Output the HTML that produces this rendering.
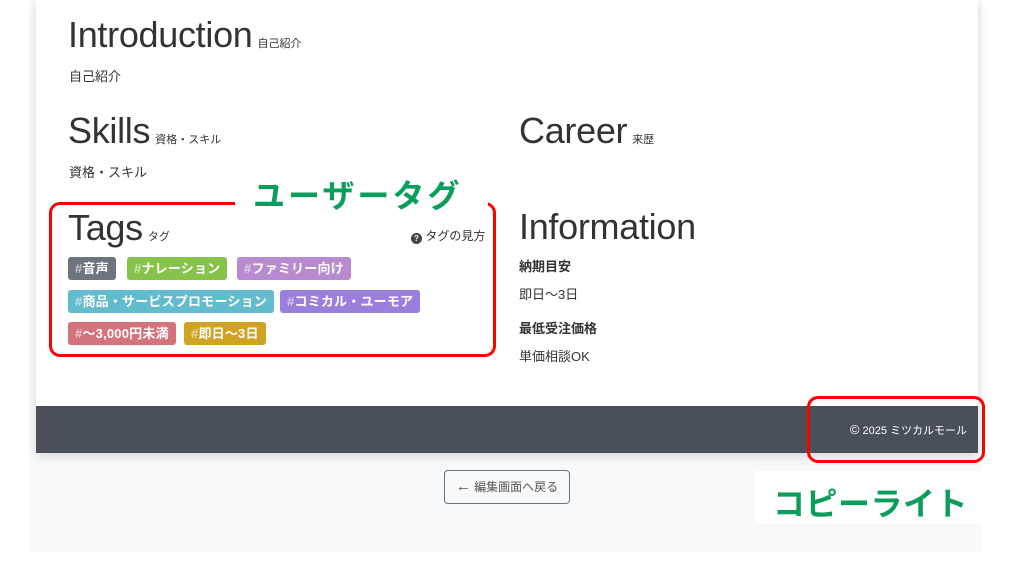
<!DOCTYPE html>
<html><head><meta charset="utf-8"><style>
*{box-sizing:border-box;margin:0;padding:0}
body{width:1012px;height:571px;background:#fff;position:relative;overflow:hidden;font-family:"Liberation Sans","Noto Sans CJK JP",sans-serif;color:#212529}
.bg{position:absolute;left:30px;top:0;width:952px;height:552px;background:#f8f9fa}
.card{position:absolute;left:36px;top:0;width:942px;height:453px;background:#fff;box-shadow:0 4px 10px rgba(0,0,0,.12)}
.abs{position:absolute;white-space:nowrap}
.h{font-size:36px;font-family:"DejaVu Sans ExtraLight","Liberation Sans",sans-serif;font-weight:200;color:#333;letter-spacing:-0.3px}
.h small{font-size:11px;font-weight:400;margin-left:5px;letter-spacing:0;font-family:"Liberation Sans","Noto Sans CJK JP",sans-serif}
.p{font-size:13px;color:#333}
.lb{font-size:13px;font-weight:bold;color:#333}
.tag{position:absolute;height:23px;line-height:23px;padding:0 7px;border-radius:3px;color:#fff;font-size:13px;font-weight:bold;white-space:nowrap;letter-spacing:0.2px}
.tag b{opacity:.6}
.foot{position:absolute;left:36px;top:406px;width:942px;height:47px;background:#495057;color:#fff;font-size:11px}
.red{position:absolute;border:3px solid #f00;border-radius:11px}
.green{font-size:32px;font-weight:bold;color:#0a9d5c;position:absolute;white-space:nowrap;letter-spacing:3px}
</style></head><body>
<div class="bg"></div>
<div class="card"></div>
<div class="abs h" style="left:68px;top:14px">Introduction<small>自己紹介</small></div>
<div class="abs p" style="left:69px;top:66px">自己紹介</div>
<div class="abs h" style="left:68px;top:110px">Skills<small>資格・スキル</small></div>
<div class="abs h" style="left:519px;top:110px">Career<small>来歴</small></div>
<div class="abs p" style="left:69px;top:162px">資格・スキル</div>
<div class="abs h" style="left:68px;top:207px">Tags<small>タグ</small></div>
<div class="abs" style="left:411px;top:227px;font-size:12px;color:#333"><span style="display:inline-block;width:11px;height:11px;border-radius:50%;background:#444;color:#fff;font-size:8px;text-align:center;line-height:11px;font-weight:bold;vertical-align:-1px">?</span> タグの見方</div>
<div class="abs h" style="left:519px;top:206px">Information</div>
<div class="abs lb" style="left:519px;top:256px">納期目安</div>
<div class="abs p" style="left:519px;top:284px">即日〜3日</div>
<div class="abs lb" style="left:519px;top:318px">最低受注価格</div>
<div class="abs p" style="left:519px;top:346px">単価相談OK</div>
<div class="tag" style="left:68px;top:257px;background:#6c757d"><b>#</b>音声</div>
<div class="tag" style="left:127px;top:257px;background:#85c34b"><b>#</b>ナレーション</div>
<div class="tag" style="left:237px;top:257px;background:#b88ad0"><b>#</b>ファミリー向け</div>
<div class="tag" style="left:68px;top:290px;background:#62bccd"><b>#</b>商品・サービスプロモーション</div>
<div class="tag" style="left:280px;top:290px;background:#9b7fdc"><b>#</b>コミカル・ユーモア</div>
<div class="tag" style="left:68px;top:322px;background:#d5737c"><b>#</b>〜3,000円未満</div>
<div class="tag" style="left:184px;top:322px;background:#d0a323"><b>#</b>即日〜3日</div>
<div class="foot"><span class="abs" style="right:11px;top:16px"><span style="font-size:13px">©</span> 2025 ミツカルモール</span></div>
<div class="abs" style="left:444px;top:470px;width:126px;height:34px;border:1px solid #6c757d;border-radius:4px;font-size:12px;color:#555;line-height:32px;text-align:center"><span style="font-size:15px;font-weight:bold">←</span> 編集画面へ戻る</div>
<div class="red" style="left:49px;top:202px;width:447px;height:155px"></div>
<div style="position:absolute;left:235px;top:195px;width:253px;height:12px;background:#fff"></div>
<div class="green" style="left:253px;top:171px">ユーザータグ</div>
<div class="red" style="left:807px;top:396px;width:178px;height:67px"></div>
<div style="position:absolute;left:755px;top:471px;width:227px;height:53px;background:#fff"></div>
<div class="green" style="left:773px;top:479px;letter-spacing:0.5px">コピーライト</div>
</body></html>
